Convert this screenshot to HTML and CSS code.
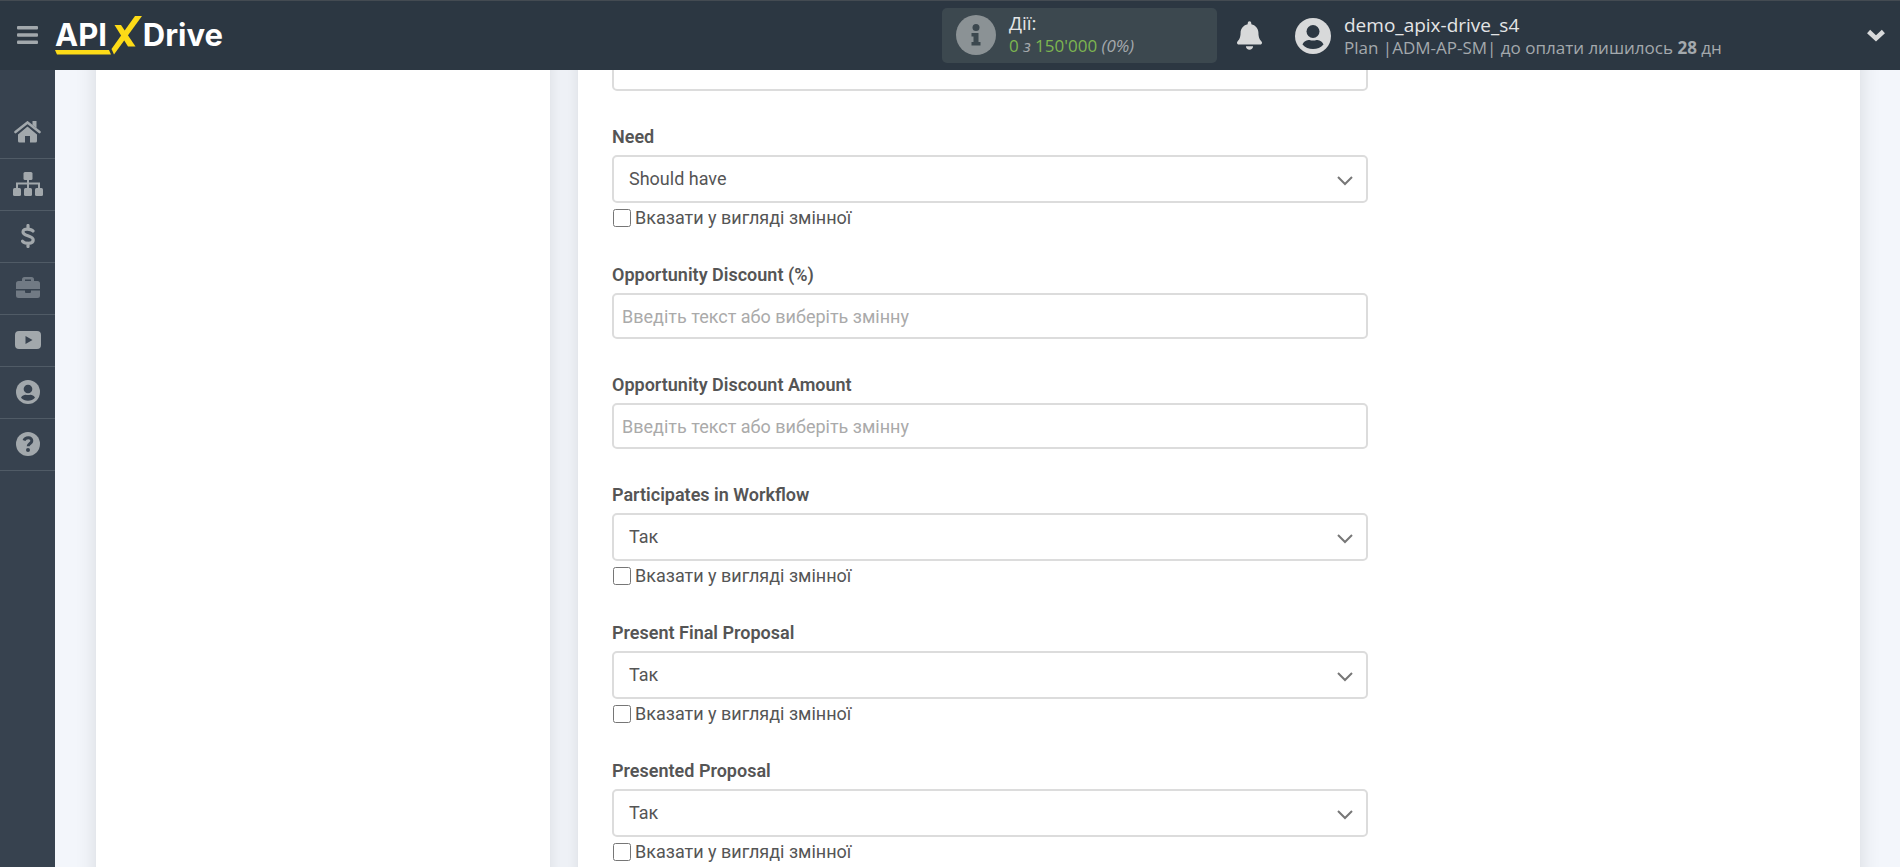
FILE: index.html
```html
<!DOCTYPE html>
<html lang="uk">
<head>
<meta charset="utf-8">
<title>ApiX-Drive</title>
<link rel="stylesheet" href="styles.css">
</head>
<body>
<header class="topbar">
  <button class="icon-btn burger" aria-label="Меню">
    <svg width="21" height="18" viewBox="0 0 21 18" fill="#a2a8ac"><rect width="21" height="3.500" rx="1"/><rect y="7.300" width="21" height="3.500" rx="1"/><rect y="14.500" width="21" height="3.500" rx="1"/></svg>
  </button>
  <a class="logo" href="#" aria-label="APIXDrive">
    <span class="logo-api">API</span>
    <svg class="logo-x" width="88" height="42" viewBox="0 0 88 42" fill="#fddb17"><path d="M0 35h54l2 4.500H2z"/><path d="M80 1h7L59 39.500 56.500 34z"/><path d="M59.500 10h6.500L80.500 31.500H73z"/></svg>
    <span class="logo-drive">Drive</span>
  </a>
  <div class="actions">
    <svg width="40" height="40" viewBox="0 0 40 40"><circle cx="20" cy="20" r="20" fill="#8b9295"/><g fill="#3c484f"><circle cx="20" cy="12.500" r="3.500"/><path d="M15.500 18h7v9H24.500v3.500h-9V27h2v-5.500h-2z"/></g></svg>
    <div class="actions-text">
      <div class="line-title">Дії:</div>
      <div class="line-sub"><span class="green">0</span> <i>з</i> <span class="green">150'000</span> <i>(0%)</i></div>
    </div>
  </div>
  <button class="icon-btn bell" aria-label="Сповіщення">
    <svg width="25" height="29" viewBox="0 0 448 512" fill="#d8d9da"><path d="M224 512c35 0 64-29 64-64H160c0 35 29 64 64 64zm215-150c-19-20-55-51-55-154 0-78-54-140-128-155V32a32 32 0 1 0-64 0v21C118 68 64 130 64 208c0 103-36 134-55 154-6 7-9 14-9 22 0 16 13 32 32 32h384c19 0 32-16 32-32 0-8-3-15-9-22z"/></svg>
  </button>
  <div class="account">
    <svg width="36" height="36" viewBox="0 0 36 36"><circle cx="18" cy="18" r="18" fill="#d8d9da"/><g fill="#2c3742"><circle cx="18" cy="13.500" r="6.500"/><path d="M7.500 26.500c1.500-3.500 4.500-4.500 7-4.500 2 .8 5 .8 7 0 2.500 0 5.500 1 7 4.500-5 6-16 6-21 0z"/></g></svg>
    <div>
      <div class="line-title">demo_apix-drive_s4</div>
      <div class="line-sub">Plan |ADM-AP-SM| до оплати лишилось <b>28</b> дн</div>
    </div>
  </div>
  <button class="icon-btn more" aria-label="Розгорнути">
    <svg width="18" height="13" viewBox="0 0 18 13" fill="none" stroke="#d8d9da" stroke-width="4.500"><path d="M1.600 2.500L9 9.500l7.400-7"/></svg>
  </button>
</header>

<div class="app">
  <nav class="sidebar">
    <a href="#" aria-label="Головна"><svg width="27" height="22" viewBox="0 0 27 22"><path d="M13.500 5.500L23 13.500V20q0 1.500-1.500 1.500H16V15h-5v6.500H5.500Q4 21.500 4 20v-6.500z"/><path d="M1.500 11.500L13.500 1.800l12 9.700" fill="none" stroke="#37424f" stroke-width="5"/><path d="M1.500 11L13.500 1.500l12 9.500" fill="none" stroke="currentColor" stroke-width="2.600" stroke-linecap="round"/><path d="M18.500 0h4v7l-4-3z"/></svg></a>
    <a href="#" aria-label="Зв'язки"><svg width="30" height="24" viewBox="0 0 30 24"><rect x="10.500" y="0" width="9" height="8" rx="1.500"/><rect x="0" y="16" width="8" height="8" rx="1.500"/><rect x="11" y="16" width="8" height="8" rx="1.500"/><rect x="22" y="16" width="8" height="8" rx="1.500"/><path d="M15 7v9M4 16v-4.500h22V16" fill="none" stroke="currentColor" stroke-width="2"/></svg></a>
    <a href="#" aria-label="Оплата"><svg width="14" height="24" viewBox="0 0 14 24"><path d="M12 7C10.500 5.200 2 3.500 2 8c0 4.500 10.200 3 10.200 8 0 4.600-8.500 3.800-10.700 1.200M7 1.500v3.500M7 19v3.500" fill="none" stroke="currentColor" stroke-width="3.200" stroke-linecap="round"/></svg></a>
    <a href="#" class="dim" aria-label="Портфель"><svg width="24" height="22" viewBox="0 0 24 22"><path fill-rule="evenodd" d="M6 4V2.500Q6 0 8.500 0h7Q18 0 18 2.500V4h3.500Q24 4 24 6.500V12H0V6.500Q0 4 2.500 4zM9 4h6V2.500H9z"/><path d="M0 13.500h9V15q0 1 1 1h4q1 0 1-1v-1.500h9v5q0 2.500-2.500 2.500h-19Q0 21 0 18.500z"/></svg></a>
    <a href="#" aria-label="Відео"><svg width="26" height="18" viewBox="0 0 26 18"><path fill-rule="evenodd" d="M4 0h18q4 0 4 4v10q0 4-4 4H4q-4 0-4-4V4Q0 0 4 0zm6.500 5v8l7-4z"/></svg></a>
    <a href="#" aria-label="Профіль"><svg width="24" height="24" viewBox="0 0 36 36"><circle cx="18" cy="18" r="18"/><g fill="#37424f"><circle cx="18" cy="13.500" r="6.500"/><path d="M7.500 26.500c1.500-3.500 4.500-4.500 7-4.500 2 .8 5 .8 7 0 2.500 0 5.500 1 7 4.500-5 6-16 6-21 0z"/></g></svg></a>
    <a href="#" aria-label="Допомога"><svg width="24" height="24" viewBox="0 0 24 24"><circle cx="12" cy="12" r="12"/><path d="M8 8.500C9.500 4.800 16 5 15.800 9c0 2.500-3.600 2.500-3.600 5.200" fill="none" stroke="#37424f" stroke-width="3"/><circle cx="12" cy="18" r="2" fill="#37424f"/></svg></a>
  </nav>
  <main class="content">
    <section class="card"></section>
    <section class="card form-card">
      <form class="form">
        <div class="group">
          <input class="control" type="text" aria-label="Змінна">
        </div>
        <div class="group">
          <label class="label" for="need">Need</label>
          <div class="select-box"><select class="control" id="need"><option>Should have</option></select><svg class="chevron" width="16" height="10" viewBox="0 0 16 10"><path d="M1 1l7 7 7-7"/></svg></div>
          <label class="check"><input type="checkbox">Вказати у вигляді змінної</label>
        </div>
        <div class="group">
          <label class="label" for="discount">Opportunity Discount (%)</label>
          <input class="control" id="discount" type="text" placeholder="Введіть текст або виберіть змінну">
        </div>
        <div class="group">
          <label class="label" for="amount">Opportunity Discount Amount</label>
          <input class="control" id="amount" type="text" placeholder="Введіть текст або виберіть змінну">
        </div>
        <div class="group">
          <label class="label" for="workflow">Participates in Workflow</label>
          <div class="select-box"><select class="control" id="workflow"><option>Так</option></select><svg class="chevron" width="16" height="10" viewBox="0 0 16 10"><path d="M1 1l7 7 7-7"/></svg></div>
          <label class="check"><input type="checkbox">Вказати у вигляді змінної</label>
        </div>
        <div class="group">
          <label class="label" for="final">Present Final Proposal</label>
          <div class="select-box"><select class="control" id="final"><option>Так</option></select><svg class="chevron" width="16" height="10" viewBox="0 0 16 10"><path d="M1 1l7 7 7-7"/></svg></div>
          <label class="check"><input type="checkbox">Вказати у вигляді змінної</label>
        </div>
        <div class="group">
          <label class="label" for="presented">Presented Proposal</label>
          <div class="select-box"><select class="control" id="presented"><option>Так</option></select><svg class="chevron" width="16" height="10" viewBox="0 0 16 10"><path d="M1 1l7 7 7-7"/></svg></div>
          <label class="check"><input type="checkbox">Вказати у вигляді змінної</label>
        </div>
      </form>
    </section>
  </main>
</div>
</body>
</html>
```
FILE: styles.css
```css
* { box-sizing: border-box; }
body {
  margin: 0;
  overflow: hidden;
  background: #f3f6fb;
  color: #555;
  font-family: Roboto, sans-serif;
  font-size: 18px;
}

.topbar {
  position: fixed;
  top: 0;
  left: 0;
  right: 0;
  z-index: 2;
  display: flex;
  align-items: center;
  height: 70px;
  padding: 0 15px 0 17px;
  background: #2c3742;
  border-top: 1px solid #444b52;
  font-family: "Open Sans", "Noto Sans", sans-serif;
}
.icon-btn {
  display: flex;
  padding: 0;
  border: 0;
  background: none;
}
.burger,
.logo { margin-bottom: 2px; }
.logo {
  position: relative;
  display: flex;
  justify-content: space-between;
  width: 168px;
  margin-left: 17px;
  color: #fff;
  font-family: Inter, sans-serif;
  font-size: 31px;
  font-weight: 700;
  line-height: 40px;
  text-decoration: none;
}
.logo-x {
  position: absolute;
  left: 0;
  top: 0;
}
.actions {
  display: flex;
  gap: 13px;
  width: 275px;
  height: 55px;
  margin-left: auto;
  padding: 7px 14px;
  border-radius: 5px;
  background: #3c484f;
}
.actions-text { margin-top: -4px; }
.line-title {
  color: #e4e5e6;
  font-size: 19px;
  line-height: 24px;
}
.line-sub {
  color: #a4a9ad;
  font-size: 17px;
  line-height: 22px;
}
.green { color: #7db550; }
.bell { margin-left: 20px; }
.account {
  display: flex;
  flex: 0 0 572px;
  align-items: center;
  gap: 13px;
  margin-left: 33px;
}

.app {
  display: flex;
  height: 100vh;
}
.sidebar {
  flex: none;
  width: 55px;
  padding-top: 107px;
  background: #37424f;
}
.sidebar a {
  display: flex;
  align-items: center;
  justify-content: center;
  height: 52px;
  padding: 0 0 1px;
  border-bottom: 1px solid #505b66;
  color: #a2a8ac;
}
.sidebar a.dim { color: #717a84; }
.sidebar svg { fill: currentColor; }

.content {
  flex: 1;
  display: grid;
  grid-template-columns: 454fr 1282fr;
  gap: 28px;
  height: 100vh;
  padding: 0 40px 0 41px;
}
.card {
  min-width: 0;
  background: #fff;
  box-shadow: 0 0 20px rgba(0, 0, 0, 0.12);
}
.form-card { padding: 45px 34px 0; }
.form { max-width: 756px; }
.group {
  display: flex;
  flex-direction: column;
  margin-bottom: 32px;
}
.label {
  margin-bottom: 5px;
  font-weight: 600;
  line-height: 27px;
}
.control {
  appearance: none;
  width: 100%;
  height: 46px;
  padding: 0 8px;
  border: 2px solid #dcdcdc;
  border-radius: 5px;
  background: #fff;
  color: #555;
  font: inherit;
}
.control::placeholder { color: #aaa; }
.select-box {
  display: grid;
  align-items: center;
}
.select-box > * { grid-area: 1 / 1; }
.select-box .control {
  height: 48px;
  padding: 0 15px 2px;
}
.chevron {
  justify-self: end;
  margin: 4px 15px 0 0;
  fill: none;
  stroke: #777;
  stroke-width: 2;
  pointer-events: none;
}
.check {
  display: flex;
  align-items: center;
  gap: 4px;
  margin-top: 3px;
  line-height: 23px;
}
.check input {
  width: 18px;
  height: 18px;
  margin: 0 0 0 1px;
}
```
